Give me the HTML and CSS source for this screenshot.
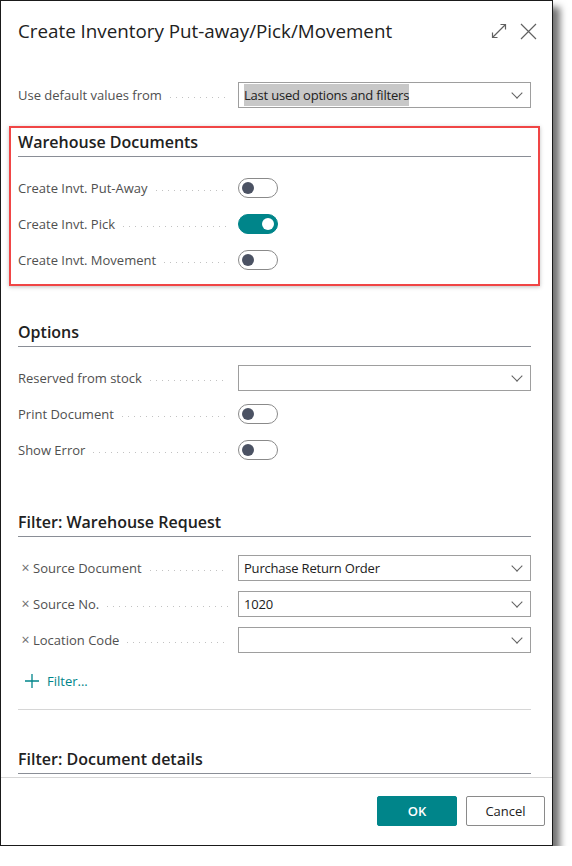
FILE: index.html
```html
<!DOCTYPE html>
<html lang="en">
<head>
  <meta charset="UTF-8" />
  <title>Create Inventory Put-away/Pick/Movement</title>
  <meta name="viewport" content="width=device-width, initial-scale=1.0">
  <link rel="stylesheet" href="styles.css">
</head>
<body>
  <div class="dialog">
    <header class="dialog-header">
      <h1 class="dialog-title">Create Inventory Put-away/Pick/Movement</h1>
      <div class="header-actions">
        <svg class="icon" width="16" height="16" viewBox="0 0 16 16">
          <path d="M1.5 14.5 L14.5 1.5 M9.5 1.5 H14.5 V6.5 M1.5 9.5 V14.5 H6.5" />
        </svg>
        <svg class="icon" width="17" height="17" viewBox="0 0 17 17">
          <path d="M1 1 L16 16 M16 1 L1 16" />
        </svg>
      </div>
    </header>

    <div class="dialog-body">
      <div class="field first">
        <label class="caption"><span>Use default values from</span><i class="leader"></i></label>
        <div class="select"><span class="selected-text">Last used options and filters</span></div>
      </div>

      <!-- Warehouse documents -->
      <section class="group marked">
        <h2 class="group-title">Warehouse Documents</h2>
        <div class="field">
          <label class="caption"><span>Create Invt. Put-Away</span><i class="leader"></i></label>
          <span class="toggle"></span>
        </div>
        <div class="field">
          <label class="caption"><span>Create Invt. Pick</span><i class="leader"></i></label>
          <span class="toggle on"></span>
        </div>
        <div class="field">
          <label class="caption"><span>Create Invt. Movement</span><i class="leader"></i></label>
          <span class="toggle"></span>
        </div>
      </section>

      <section class="group">
        <h2 class="group-title">Options</h2>
        <div class="field">
          <label class="caption"><span>Reserved from stock</span><i class="leader"></i></label>
          <div class="select"></div>
        </div>
        <div class="field">
          <label class="caption"><span>Print Document</span><i class="leader"></i></label>
          <span class="toggle"></span>
        </div>
        <div class="field">
          <label class="caption"><span>Show Error</span><i class="leader"></i></label>
          <span class="toggle"></span>
        </div>
      </section>

      <section class="group">
        <h2 class="group-title">Filter: Warehouse Request</h2>
        <div class="field">
          <label class="caption"><b class="remove">×</b><span>Source Document</span><i class="leader"></i></label>
          <div class="select">Purchase Return Order</div>
        </div>
        <div class="field">
          <label class="caption"><b class="remove">×</b><span>Source No.</span><i class="leader"></i></label>
          <div class="select">1020</div>
        </div>
        <div class="field">
          <label class="caption"><b class="remove">×</b><span>Location Code</span><i class="leader"></i></label>
          <div class="select"></div>
        </div>
        <div class="add-filter">
          <svg width="14" height="14" viewBox="0 0 14 14">
            <path d="M7 0 V14 M0 7 H14" />
          </svg>
          <span>Filter...</span>
        </div>
      </section>

      <hr class="separator">

      <section class="group details">
        <h2 class="group-title">Filter: Document details</h2>
      </section>
    </div>

    <footer class="dialog-footer">
      <button class="btn primary">OK</button>
      <button class="btn">Cancel</button>
    </footer>
  </div>
</body>
</html>
```

FILE: styles.css
```css
* {
  box-sizing: border-box;
}
body {
  margin: 0;
  background: #fff;
  font-family: "Segoe UI", "Open Sans", sans-serif;
  color: #212121;
}
.dialog {
  width: 553px;
  height: 846px;
  border: 1px solid #1a1a1a;
  background: #fff;
  display: flex;
  flex-direction: column;
  box-shadow: 7px 7px 7px rgba(0, 0, 0, 0.55);
}
.dialog-header {
  height: 62px;
  flex: none;
  display: flex;
  align-items: flex-start;
  justify-content: space-between;
  padding: 16px 15px 0 17px;
}
.dialog-title {
  margin: 0;
  font-size: 18.8px;
  font-weight: 400;
  line-height: 28px;
}
.header-actions {
  display: flex;
  align-items: center;
  gap: 13px;
  height: 28px;
}
.icon {
  fill: none;
  stroke: #616161;
  stroke-width: 1.2;
}
.dialog-body {
  flex: 1;
  overflow: hidden;
  padding: 14px 21px 0 17px;
}
.field {
  display: flex;
  align-items: center;
  height: 36px;
}
.caption {
  width: 220px;
  flex: none;
  display: flex;
  align-items: center;
  font-size: 13px;
  color: #505050;
  white-space: nowrap;
}
.leader {
  flex: 1;
  height: 1px;
  margin: 4px 10px 0 8px;
  background-image: linear-gradient(to right, #c2c2c2 1px, transparent 1px);
  background-size: 6px 1px;
  background-repeat: repeat-x;
}
.remove {
  font-weight: 400;
  width: 15px;
  color: #6e6e6e;
  text-align: center;
  font-size: 14px;
  line-height: 1;
}
.select {
  flex: 1;
  height: 26px;
  border: 1px solid #9e9e9e;
  padding: 0 30px 0 5px;
  font-size: 13px;
  letter-spacing: -0.2px;
  line-height: 24px;
  color: #212121;
  position: relative;
}
.select::after {
  content: "";
  position: absolute;
  right: 9px;
  top: 6px;
  width: 7px;
  height: 7px;
  border-right: 1px solid #616161;
  border-bottom: 1px solid #616161;
  transform: rotate(45deg);
}
.selected-text {
  background: #c8c8c8;
  padding: 2px 0;
}
.toggle {
  width: 40px;
  height: 20px;
  border: 1px solid #8a8a8a;
  border-radius: 10px;
  position: relative;
}
.toggle::after {
  content: "";
  position: absolute;
  left: 3px;
  top: 3px;
  width: 12px;
  height: 12px;
  border-radius: 50%;
  background: #4b5263;
}
.toggle.on {
  background: #00858a;
  border-color: #00858a;
}
.toggle.on::after {
  left: auto;
  right: 3px;
  background: #fff;
}
.group {
  margin-top: 40px;
}
.group-title {
  margin: 0 0 13px;
  font-size: 16px;
  font-weight: 600;
  line-height: 28px;
  border-bottom: 1px solid #8a8e96;
}
.group.marked {
  margin: 13px -9px 0;
  padding: 0 7px 6px;
  border: 2px solid #f04545;
  box-shadow: 0 1px 4px rgba(0, 0, 0, 0.25);
}
.group.marked + .group {
  margin-top: 32px;
}
.add-filter {
  display: flex;
  align-items: center;
  gap: 8px;
  height: 36px;
  margin-top: 5px;
  padding-left: 7px;
  color: #00858a;
  font-size: 13px;
}
.add-filter svg {
  fill: none;
  stroke: #00858a;
  stroke-width: 1.3;
}
.separator {
  margin: 10px 0 0;
  border: none;
  border-top: 1px solid #d6d6d6;
}
.group.details {
  margin-top: 35px;
}
.dialog-footer {
  height: 68px;
  flex: none;
  border-top: 1px solid #d6d6d6;
  display: flex;
  justify-content: flex-end;
  align-items: flex-start;
  gap: 9px;
  padding: 18px 7px 0 0;
}
.btn {
  width: 79px;
  height: 30px;
  border: 1px solid #8a8a8a;
  border-radius: 2px;
  background: #fff;
  font-family: inherit;
  font-size: 13px;
  color: #212121;
}
.btn.primary {
  width: 80px;
  background: #00858a;
  border-color: #00858a;
  color: #fff;
  font-weight: 600;
}
```
